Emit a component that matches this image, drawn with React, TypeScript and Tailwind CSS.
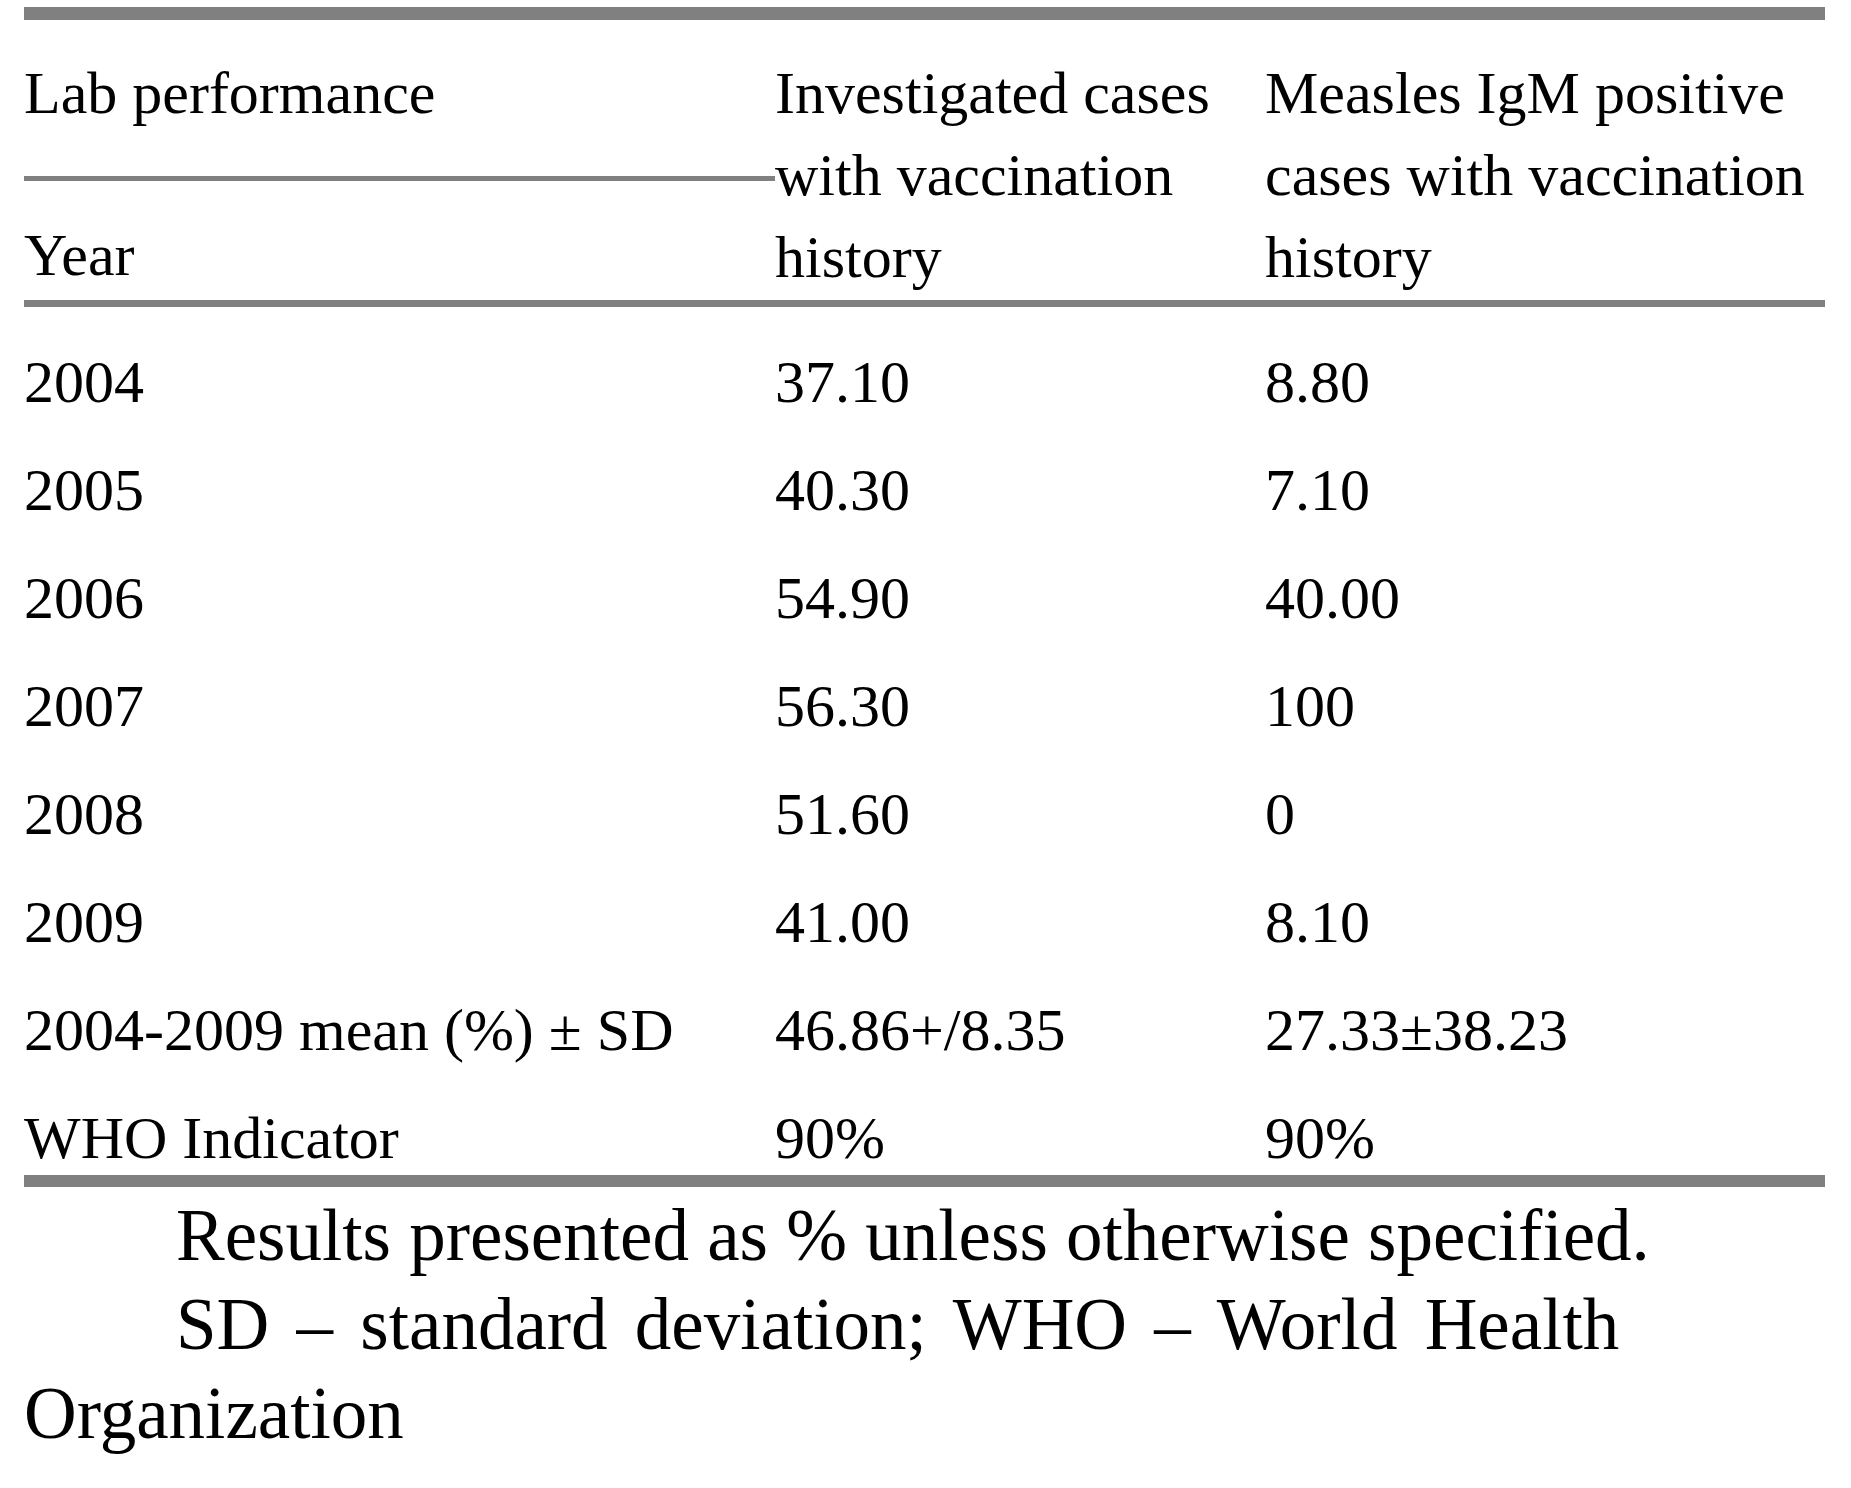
const rows = [
  ['2004', '37.10', '8.80'],
  ['2005', '40.30', '7.10'],
  ['2006', '54.90', '40.00'],
  ['2007', '56.30', '100'],
  ['2008', '51.60', '0'],
  ['2009', '41.00', '8.10'],
  ['2004-2009 mean (%) ± SD', '46.86+/8.35', '27.33±38.23'],
  ['WHO Indicator', '90%', '90%'],
];

export default function App() {
  return (
    <div
      className="min-h-screen w-full bg-white pl-6 pr-[26px] pt-[7px] text-black"
      style={{ fontFamily: '"Liberation Serif", "Times New Roman", serif' }}
    >
      <div className="h-[13px] w-full bg-[#808080]" />

      {/* header */}
      <div className="grid grid-cols-[751px_490px_1fr] pt-8 text-[60px] leading-[82px]">
        <div className="flex flex-col">
          <div>Lab performance</div>
          <div className="mt-[42px] h-[5px] w-full bg-[#808080]" />
          <div className="mt-[33px]">Year</div>
        </div>
        <div>
          Investigated cases
          <br />
          with vaccination
          <br />
          history
        </div>
        <div>
          Measles IgM positive
          <br />
          cases with vaccination
          <br />
          history
        </div>
      </div>
      <div className="mt-[2px] h-[7px] w-full bg-[#808080]" />

      {/* body */}
      <div className="flex flex-col gap-[38px] pb-[2px] pt-10 text-[60px] leading-[70px]">
        {rows.map((r) => (
          <div key={r[0]} className="grid grid-cols-[751px_490px_1fr]">
            <div>{r[0]}</div>
            <div>{r[1]}</div>
            <div>{r[2]}</div>
          </div>
        ))}
      </div>
      <div className="h-[12px] w-full bg-[#808080]" />

      {/* notes */}
      <div className="mt-1 text-[73px] leading-[89px]">
        <p className="indent-[152px]">Results presented as % unless otherwise specified.</p>
        <p className="indent-[152px] [word-spacing:9px]">SD – standard deviation; WHO – World Health Organization</p>
      </div>
    </div>
  );
}
